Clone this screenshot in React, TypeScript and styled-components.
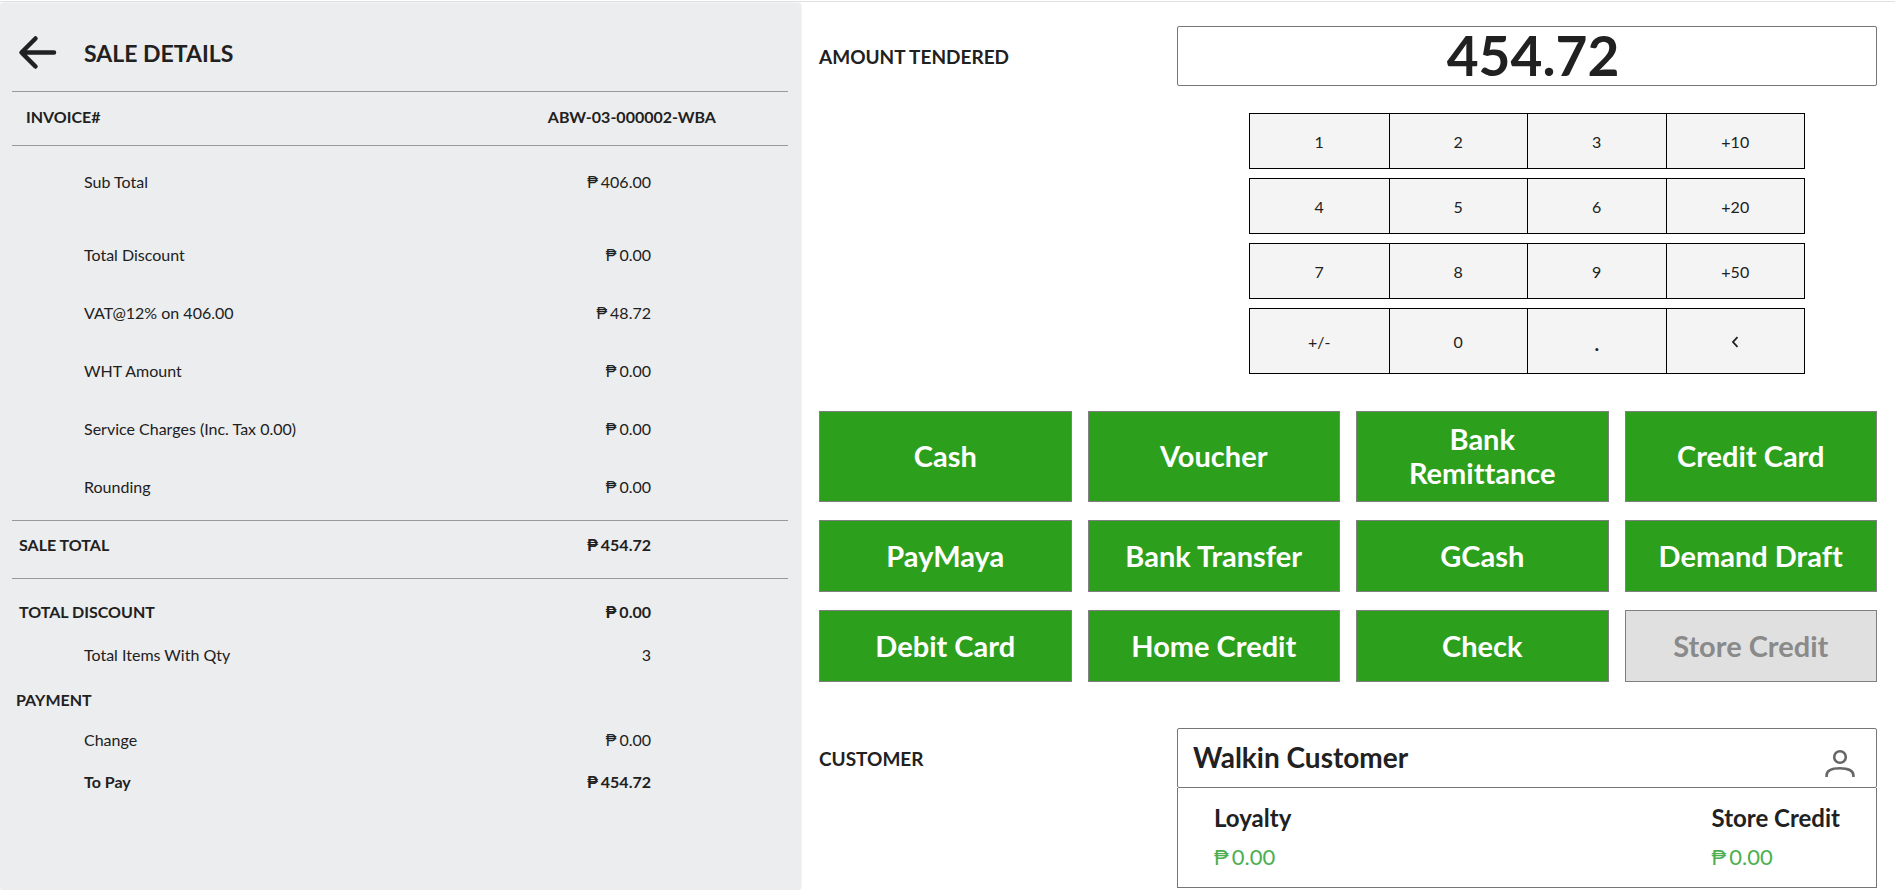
import React, { useState } from "react";
import styled, { createGlobalStyle } from "styled-components";

const GlobalStyle = createGlobalStyle`
  * { box-sizing: border-box; }
  body {
    margin: 0;
    background: #fff;
    color: #212121;
    font-family: Lato, "Open Sans", sans-serif;
    font-size: 16px;
    font-variant-ligatures: none;
  }
  button, input { font-family: inherit; color: inherit; font-variant-ligatures: inherit; }
`;

const Page = styled.div`
  display: grid;
  grid-template-columns: 801fr 1094fr;
  grid-template-rows: auto 1fr;
  min-height: 100vh;
  padding-top: 1px;
`;

const TopLine = styled.div`
  grid-column: 1 / -1;
  height: 2px;
  border-top: 1px solid #e0e0e0;
`;

const Summary = styled.aside`
  padding: 0 13px 0 12px;
  background: #ecedef;
  border-radius: 4px;
  box-shadow: 0 0 2px rgba(0, 0, 0, 0.15);
`;

const SummaryHeader = styled.header`
  display: flex;
  align-items: center;
  gap: 27px;
  height: 88px;
  padding: 12px 0 0 6px;
`;

const BackButton = styled.button`
  display: flex;
  padding: 0;
  border: 0;
  background: none;
  cursor: pointer;
`;

const Title = styled.h1`
  margin: 0;
  font-size: 23px;
  font-weight: 700;
`;

const Lines = styled.dl<{ $ruled?: boolean }>`
  display: flow-root;
  margin: 0;
  border-top: ${(p) => (p.$ruled ? "1px solid #999a9c" : "0")};
`;

const Line = styled.div<{
  $height: number;
  $indent?: number;
  $end?: number;
  $strong?: boolean;
  $before?: number;
  $after?: number;
}>`
  display: flex;
  justify-content: space-between;
  align-items: center;
  height: ${(p) => p.$height}px;
  margin: ${(p) => p.$before ?? 0}px 0 ${(p) => p.$after ?? 0}px;
  padding: 0 ${(p) => p.$end ?? 137}px 0 ${(p) => p.$indent ?? 72}px;
  font-weight: ${(p) => (p.$strong ? 700 : 400)};
  dt, dd { margin: 0; }
`;

const PaymentTitle = styled.h2`
  margin: 0;
  padding-left: 4px;
  font-size: 16px;
  font-weight: 700;
  line-height: 49px;
`;

const Sign = styled.span`
  margin-right: 3px;
  font-family: "Open Sans", sans-serif;
  line-height: 1;
`;

const Checkout = styled.main`
  padding: 23px 18px 0;
`;

const Field = styled.section`
  display: grid;
  grid-template-columns: 358fr 700fr;
`;

const labelText = `
  margin: 0;
  padding-top: 19px;
  font-size: 19px;
  font-weight: 700;
  line-height: 24px;
`;

const FieldLabel = styled.label`
  ${labelText}
`;

const FieldHeading = styled.h2`
  ${labelText}
`;

const AmountInput = styled.input`
  width: 100%;
  height: 60px;
  padding: 0 0 3px 12px;
  border: 1px solid #767676;
  border-radius: 2px;
  background: #fff;
  font-size: 55px;
  font-weight: 700;
  text-align: center;
`;

const Keypad = styled.div`
  grid-column: 2;
  display: grid;
  gap: 9px;
  width: 80%;
  max-width: 556px;
  margin: 27px auto 37px;
`;

const KeyRow = styled.div<{ $tall?: boolean }>`
  display: grid;
  grid-template-columns: repeat(4, 1fr);
  height: ${(p) => (p.$tall ? 66 : 56)}px;
  border: 1px solid #000;
`;

const Key = styled.button<{ $heavy?: boolean }>`
  padding: 0;
  border: 0;
  background: #f4f4f4;
  font-size: ${(p) => (p.$heavy ? 24 : 16)}px;
  cursor: pointer;
  & + & { border-left: 1px solid #000; }
`;

const Methods = styled.div`
  display: grid;
  grid-template-columns: repeat(4, 1fr);
  gap: 18px 16px;
  margin-bottom: 46px;
`;

const Method = styled.button`
  min-height: 72px;
  padding: 10px 24px 11px;
  border: 1px solid #808080;
  background: #2ca01c;
  color: #fff;
  font-size: 29px;
  font-weight: 700;
  line-height: 34px;
  cursor: pointer;
  &:disabled {
    background: #e0e0e0;
    color: #8a8a8a;
    cursor: default;
  }
`;

const CustomerBar = styled.div`
  display: flex;
  justify-content: space-between;
  align-items: center;
  height: 60px;
  padding: 0 20px 3px 15px;
  border: 1px solid #767676;
  border-radius: 2px;
  font-size: 28px;
  font-weight: 700;
`;

const IconButton = styled.button`
  display: flex;
  padding: 14px 0 0;
  border: 0;
  background: none;
  color: #666;
  cursor: pointer;
`;

const Balances = styled.dl`
  display: flex;
  justify-content: space-between;
  margin: 0;
  padding: 14px 36px;
  border: 1px solid #767676;
  border-top: 0;
`;

const Balance = styled.div`
  font-size: 24px;
  line-height: 32px;
  dt { font-weight: 700; }
  dd {
    margin: 7px 0 0;
    color: #4caf50;
    font-size: 22px;
  }
`;

const charges = [
  ["Total Discount", "0.00"],
  ["VAT@12% on 406.00", "48.72"],
  ["WHT Amount", "0.00"],
  ["Service Charges (Inc. Tax 0.00)", "0.00"],
  ["Rounding", "0.00"],
];

const keyRows = [
  ["1", "2", "3", "+10"],
  ["4", "5", "6", "+20"],
  ["7", "8", "9", "+50"],
  ["+/-", "0", ".", "<"],
];

const methods = [
  "Cash", "Voucher", "Bank Remittance", "Credit Card",
  "PayMaya", "Bank Transfer", "GCash", "Demand Draft",
  "Debit Card", "Home Credit", "Check", "Store Credit",
];

function Peso({ value }: { value: string }) {
  return (
    <>
      <Sign>{"\u20B1"}</Sign>
      {value}
    </>
  );
}

function BackArrow() {
  return (
    <svg width="39" height="36" viewBox="0 0 39 36" fill="none" stroke="currentColor" strokeWidth="4.500" strokeLinecap="round" strokeLinejoin="round" aria-hidden="true">
      <path d="M36 17.500H4M17.500 3.500L3.500 17.500L17.500 31.500" />
    </svg>
  );
}

function PersonIcon() {
  return (
    <svg width="32" height="30" viewBox="0 0 32 30" fill="none" stroke="currentColor" strokeWidth="2.600" aria-hidden="true">
      <circle cx="16" cy="8" r="5.800" />
      <path d="M2.600 28V26.500C2.600 21.500 8 19.300 16 19.300S29.400 21.500 29.400 26.500V28" />
    </svg>
  );
}

function KeyFace({ value }: { value: string }) {
  if (value !== "<") return <>{value}</>;
  return (
    <svg width="8" height="12" viewBox="0 0 8 12" fill="none" stroke="currentColor" strokeWidth="1.800" aria-hidden="true">
      <path d="M6.500 1.200L2 6L6.500 10.800" />
    </svg>
  );
}

export default function App() {
  const [amount, setAmount] = useState("454.72");

  return (
    <>
      <GlobalStyle />
      <Page>
        <TopLine />
        <Summary>
          <SummaryHeader>
            <BackButton aria-label="Back"><BackArrow /></BackButton>
            <Title>SALE DETAILS</Title>
          </SummaryHeader>
          <Lines $ruled>
            <Line $height={48} $after={5} $indent={14} $end={72} $strong>
              <dt>INVOICE#</dt><dd>ABW-03-000002-WBA</dd>
            </Line>
          </Lines>
          <Lines $ruled>
            <Line $height={70} $after={9}><dt>Sub Total</dt><dd><Peso value="406.00" /></dd></Line>
            {charges.map(([name, value], i) => (
              <Line key={name} $height={58} $after={i === charges.length - 1 ? 5 : 0}>
                <dt>{name}</dt><dd><Peso value={value} /></dd>
              </Line>
            ))}
          </Lines>
          <Lines $ruled>
            <Line $height={46} $after={11} $indent={7} $strong>
              <dt>SALE TOTAL</dt><dd><Peso value="454.72" /></dd>
            </Line>
          </Lines>
          <Lines $ruled>
            <Line $height={44} $before={10} $indent={7} $strong>
              <dt>TOTAL DISCOUNT</dt><dd><Peso value="0.00" /></dd>
            </Line>
            <Line $height={42}><dt>Total Items With Qty</dt><dd>3</dd></Line>
          </Lines>
          <PaymentTitle>PAYMENT</PaymentTitle>
          <Lines>
            <Line $height={30}><dt>Change</dt><dd><Peso value="0.00" /></dd></Line>
            <Line $height={54} $strong><dt>To Pay</dt><dd><Peso value="454.72" /></dd></Line>
          </Lines>
        </Summary>

        <Checkout>
          <Field>
            <FieldLabel htmlFor="tendered">AMOUNT TENDERED</FieldLabel>
            <AmountInput id="tendered" value={amount} onChange={(e) => setAmount(e.target.value)} />
            <Keypad>
              {keyRows.map((row, i) => (
                <KeyRow key={row[0]} $tall={i === 3}>
                  {row.map((k) => (
                    <Key key={k} $heavy={k === "."} aria-label={k === "<" ? "Delete" : undefined}>
                      <KeyFace value={k} />
                    </Key>
                  ))}
                </KeyRow>
              ))}
            </Keypad>
          </Field>
          <Methods>
            {methods.map((m) => (
              <Method key={m} disabled={m === "Store Credit"}>{m}</Method>
            ))}
          </Methods>
          <Field>
            <FieldHeading>CUSTOMER</FieldHeading>
            <div>
              <CustomerBar>
                Walkin Customer
                <IconButton aria-label="Choose customer"><PersonIcon /></IconButton>
              </CustomerBar>
              <Balances>
                <Balance><dt>Loyalty</dt><dd><Peso value="0.00" /></dd></Balance>
                <Balance><dt>Store Credit</dt><dd><Peso value="0.00" /></dd></Balance>
              </Balances>
            </div>
          </Field>
        </Checkout>
      </Page>
    </>
  );
}
